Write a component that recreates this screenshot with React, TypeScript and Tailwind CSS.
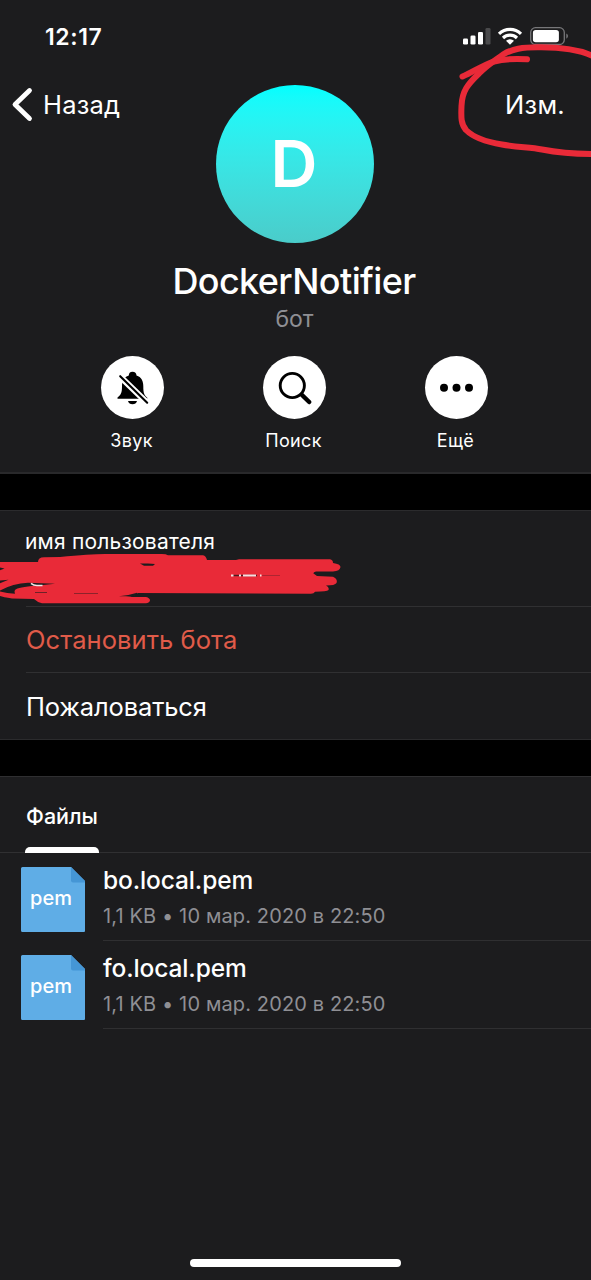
import type { ReactNode } from 'react'

const files = [
  { name: 'bo.local.pem', meta: '1,1 KB • 10 мар. 2020 в 22:50' },
  { name: 'fo.local.pem', meta: '1,1 KB • 10 мар. 2020 в 22:50' },
]

function StatusBar() {
  return (
    <div className="flex h-[72px] items-center justify-between pt-[2px] pr-[22px] pl-[45px]">
      <span className="text-[23px] leading-7 font-semibold tracking-[0.6px]">12:17</span>
      <svg width="107" height="22" viewBox="0 0 107 22" aria-hidden>
        <g fill="#fff">
          <rect x="1" y="12.5" width="5" height="6" rx="1.3" />
          <rect x="8.5" y="9.5" width="5" height="9" rx="1.3" />
          <rect x="16" y="6" width="5" height="12.5" rx="1.3" />
          <rect x="23.5" y="2" width="5" height="16.5" rx="1.3" fill="#4a4a4c" />
        </g>
        <g fill="none" stroke="#fff" strokeWidth="3.2">
          <path d="M37 7.8a16 16 0 0 1 22 0" />
          <path d="M41 12a10.2 10.2 0 0 1 14 0" />
        </g>
        <path d="M48 18.8l-4-4a5.8 5.8 0 0 1 8 0z" fill="#fff" />
        <rect x="68.7" y="1.7" width="33.6" height="16.8" rx="4.8" fill="none" stroke="#77777a" strokeWidth="1.3" />
        <rect x="70.9" y="3.9" width="26" height="12.4" rx="2.8" fill="#fff" />
        <path d="M104.3 7.4a3 3 0 0 1 0 5.4z" fill="#77777a" />
      </svg>
    </div>
  )
}

function RoundAction({ label, children }: { label: string; children: ReactNode }) {
  return (
    <div className="flex w-[162px] flex-col items-center">
      <div className="size-[63px] rounded-full bg-white">
        <svg width="63" height="63" viewBox="0 0 63 63" aria-hidden>
          {children}
        </svg>
      </div>
      <span className="mt-[10px] pr-[2px] text-[18px] leading-6 tracking-[0.35px]">{label}</span>
    </div>
  )
}

function FileRow({ name, meta }: { name: string; meta: string }) {
  return (
    <li className="flex h-[88px] pl-[21px]">
      <div className="relative mt-[14px] h-[65px] w-[64px] shrink-0">
        <svg width="64" height="65" viewBox="0 0 64 65" aria-hidden>
          <path d="M1.5 0H50l14 14v50a1 1 0 0 1-1 1H1.5A1.5 1.5 0 0 1 0 63.5V1.5A1.5 1.5 0 0 1 1.5 0z" fill="#5fade6" />
          <path d="M50 0l14 14v1.5H52a2 2 0 0 1-2-2z" fill="#4596d5" />
        </svg>
        <span className="absolute inset-x-0 top-[17px] -left-[4px] text-center text-[20px] leading-7 font-medium">pem</span>
      </div>
      <div className="ml-[18px] flex-1 border-b border-[#2f2f31] pt-[10px]">
        <p className="text-[24.5px] leading-[34px] font-medium tracking-[-0.12px]">{name}</p>
        <p className="mt-[5px] text-[20px] leading-7 tracking-[0.13px] text-[#8f8f94]">{meta}</p>
      </div>
    </li>
  )
}

/* Red marker drawn over the screen */
function Marker() {
  return (
    <svg className="pointer-events-none absolute inset-0" width="591" height="1280" viewBox="0 0 591 1280" aria-hidden>
      <g fill="none" stroke="#e92a38" strokeWidth="6" strokeLinecap="round" strokeLinejoin="round">
        <path d="M527 59.3C514 58.5 504 59 494 61.5C483 65 473 72 462.5 76.5" />
        <path d="M595 57C580 49.5 558 47.3 541 47.3C522 47 512 49 503 54.5C496 60 488 64 479 73.5C468 84 462 91 461.5 106C461 118 461 124 466 130C474 138 486 142 502 144.5C518 147.5 530 147 542 149.5C560 153 574 154 595 154" />
      </g>
      <path
        fill="#e92a38"
        d="M0 562H38Q38 557.500 44 557.300L60 557Q90 554 105 554H162Q166 554 168 555.300H203Q206 556 207 560H236L239 559.300H330Q333 560 333 563Q340.500 564 340.500 567Q340 571 333 571.500L316 571.500Q313 572.500 313.500 573.500L317 576L333 576.700Q338 579 336.500 583Q335 585.500 326 585.500Q329.500 587 328.500 590Q327 591.500 315 591.700Q314 593.700 311 593.700L138 593Q135 596 126 597H146Q150 598 150 600.500Q149 603.300 146 603.300H42Q37 602 34 599L12 598.500Q3 597 0 596Z"
      />
      <g fill="#1c1c1e">
        <path d="M0 567.500l4.500 1L0 570.300zM0 580.500l8.500-.7-8.500 3.500z" />
        <path d="M0 590.500Q13 583.300 28 582.700L55 583.700L36 585.800Q18 587 15 590Q14 591.500 15 593.800Q7 593.500 0 591.500z" />
        <path d="M140 563.500h8l7 .5-2 1.700h-9z" />
        <path d="M35 592h12v1h-12zM74 593h24v.8H74z" opacity="0.6" />
        <path d="M119 596.300Q129 595.500 137 592.800L138 594.500L133 596.300Z" />
      </g>
      <path d="M31 583.300q2.500 2.200 6 2.200h5.500" fill="none" stroke="#f2e4e5" strokeWidth="1.6" />
      <path d="M233 575.500h24" fill="none" stroke="#4a1c22" strokeWidth="1.4" />
      <path d="M231 575.500h2.500M239 575.500h2M243 575.500h13M260 575.500h1.5" fill="none" stroke="#f5dfe0" strokeWidth="1.8" />
      <path d="M262 575.500h18" fill="none" stroke="#9e2530" strokeWidth="0.8" />
    </svg>
  )
}

export default function App() {
  return (
    <div className="relative flex h-[1280px] w-[591px] flex-col overflow-hidden bg-[#1c1c1e] font-['Inter','Noto_Sans',sans-serif] whitespace-nowrap text-white">
      <header className="h-[474px] shrink-0 border-b-2 border-[#29292b]">
        <StatusBar />
        <div className="grid h-[171px] grid-cols-[216px_158px_217px] pt-[13px]">
          <div className="flex h-[39px] items-center pl-[11px]">
            <svg width="24" height="36" viewBox="0 0 24 36" aria-hidden>
              <path d="M18.5 3.500L4 17.500l14.500 14" fill="none" stroke="#fff" strokeWidth="4.800" strokeLinecap="round" strokeLinejoin="round" />
            </svg>
            <span className="ml-[8px] text-[25.5px] leading-8 tracking-[0.2px]">Назад</span>
          </div>
          <div className="flex size-[158px] items-center justify-center rounded-full bg-linear-to-b from-[#00ffff] to-[#4accca] pr-[2px] text-[65px] font-semibold">
            D
          </div>
          <div className="flex h-[39px] items-center justify-end pr-[26px] text-[25.5px] leading-8 tracking-[0.3px]">Изм.</div>
        </div>
        <h1 className="mt-[16px] pr-[3px] text-center text-[36px] leading-[44px] font-medium tracking-[-0.6px]">DockerNotifier</h1>
        <p className="pt-px pr-[2px] text-center text-[23px] leading-[30px] text-[#8f8f94]">бот</p>
        <div className="mt-[22px] flex justify-center pr-[2px]">
          <RoundAction label="Звук">
            <path d="M31.5 15.8c2.500 0 4 1.700 4 3.800 5 1.500 6.800 5.700 6.800 10.700 0 7 .8 8.700 4 11.500v1H16.500V41.500c3.500-2.500 4.500-4.700 4.500-11.200 0-5 2-9.200 6.800-10.700 0-2.100 1.200-3.800 3.700-3.800zM27 45h9q-1 3.300-4.500 3.300T27 45z" fill="#000" />
            <path d="M18 19.500l31 30" stroke="#fff" strokeWidth="6" />
            <path d="M19.200 20.200l27 26.500" stroke="#000" strokeWidth="2.100" strokeLinecap="round" />
          </RoundAction>
          <RoundAction label="Поиск">
            <circle cx="29.300" cy="29.500" r="12.100" fill="none" stroke="#000" strokeWidth="2.900" />
            <path d="M39 39l7.200 7" stroke="#000" strokeWidth="4.500" strokeLinecap="round" />
          </RoundAction>
          <RoundAction label="Ещё">
            <circle cx="19" cy="31.700" r="4" />
            <circle cx="31.500" cy="31.700" r="4" />
            <circle cx="44" cy="31.700" r="4" />
          </RoundAction>
        </div>
      </header>

      <div className="h-[36px] shrink-0 bg-black" />

      <section className="h-[230px] shrink-0 border-y border-[#2b2b2d] pl-[26px]">
        <div className="h-[96px] border-b border-[#303032] pt-[17px]">
          <p className="-ml-px text-[21px] leading-7 tracking-[0.2px]">имя пользователя</p>
        </div>
        <div className="flex h-[66px] items-center border-b border-[#303032] pt-[2px] text-[25.5px] tracking-[0.07px] text-[#e05b49]">
          Остановить бота
        </div>
        <div className="flex h-[66px] items-center pt-[2px] text-[25.5px] tracking-[-0.15px]">Пожаловаться</div>
      </section>

      <div className="h-[36px] shrink-0 bg-black" />

      <section className="flex-1 border-t border-[#2f2f31]">
        <div className="flex h-[76px] border-b border-[#303032] pl-[25px]">
          <div className="flex h-[76px] w-[74px] flex-col items-center justify-between">
            <span className="mt-[25px] text-[21.5px] leading-7 font-medium">Файлы</span>
            <span className="h-[6px] w-full rounded-t-[5px] bg-white" />
          </div>
        </div>
        <ul>
          {files.map((f) => (
            <FileRow key={f.name} {...f} />
          ))}
        </ul>
      </section>

      <div className="mb-[13px] h-[8px] w-[211px] shrink-0 self-center rounded-full bg-white" />

      <Marker />
    </div>
  )
}
